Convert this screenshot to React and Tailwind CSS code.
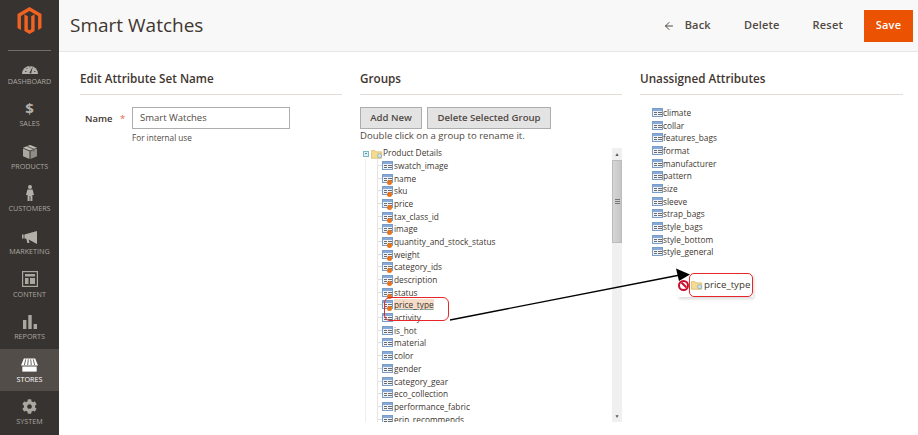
import { ArrowLeft } from "lucide-react";
import { FaCog } from "react-icons/fa";

const navItems = [
  {
    label: "DASHBOARD",
    icon: (
      <svg viewBox="0 0 16 11" className="w-[16px] h-[11px]">
        <path d="M0 11A8 8 0 0 1 16 11z" fill="#b3afa9" />
        <path d="M7.4 10 11 3l-1.9 7.4z" fill="#373330" />
        <path d="M3 8.5h1.5M8 3v1.5M12 8.5h1.4M4.5 5l1 1" stroke="#373330" strokeWidth="0.8" />
      </svg>
    ),
  },
  {
    label: "SALES",
    icon: <span className="block h-[20px] -mb-[2px] text-[15px] leading-[20px] font-bold text-[#b3afa9]">$</span>,
  },
  {
    label: "PRODUCTS",
    icon: (
      <svg viewBox="0 0 14 14" className="w-[14px] h-[14px]">
        <path d="M7 0 14 2.8 7 5.6 0 2.8z" fill="#c4c0ba" />
        <path d="M0 3.6 6.5 6.3V14L0 11.2z" fill="#aaa6a0" />
        <path d="M14 3.6 7.5 6.3V14l6.5-2.8z" fill="#8f8b85" />
        <path d="M3 1.6 10 4.4v2.4l1.6-.7V3.7L4.7 1z" fill="#6f6a65" />
      </svg>
    ),
  },
  {
    label: "CUSTOMERS",
    icon: (
      <svg viewBox="0 0 8 16" className="w-[8px] h-[16px]" fill="#b3afa9">
        <circle cx="4" cy="2" r="2" />
        <path d="M1.4 4.6h5.2L8 10H6.4v6H4.4v-5h-.8v5h-2v-6H0z" />
      </svg>
    ),
  },
  {
    label: "MARKETING",
    icon: (
      <svg viewBox="0 0 15 13" className="w-[15px] h-[13px]" fill="#b3afa9">
        <path d="M0 3.6h1.6v3.8H0z" />
        <path d="M2.4 3.4 15 0v13L6.6 8.6l.9 3.4H5.4L4.3 7.8 2.4 7.6z" />
      </svg>
    ),
  },
  {
    label: "CONTENT",
    icon: (
      <svg viewBox="0 0 16 16" className="w-[16px] h-[16px]" fill="none" stroke="currentColor">
        <rect x="0.6" y="0.6" width="14.8" height="14.8" strokeWidth="1.2" />
        <path d="M3 3h10v2.4H3zM3 7h3.5v6H3zM8 7h5v6H8z" fill="currentColor" stroke="none" />
      </svg>
    ),
  },
  {
    label: "REPORTS",
    icon: (
      <svg viewBox="0 0 14 14" className="w-[14px] h-[14px]" fill="currentColor">
        <path d="M0 5h3.4v9H0zM5.3 0h3.4v14H5.3zM10.6 9H14v5h-3.4z" />
      </svg>
    ),
  },
  {
    label: "STORES",
    icon: (
      <svg viewBox="0 0 18 14" className="w-[17px] h-[14px]" fill="#fff">
        <path d="M3 0h12l3 7.4H0z" />
        <path d="M5 1 3.6 7M7.7 1l-.6 6M10.3 1l.6 6M13 1l1.4 6" stroke="#524d49" strokeWidth="0.9" />
        <path d="M1.4 8.6h15.2V14H1.4z" />
      </svg>
    ),
    active: true,
  },
  { label: "SYSTEM", icon: <FaCog className="w-[15px] h-[15px]" /> },
];

const treeRows = [
  ["swatch_image", false],
  ["name", true],
  ["sku", true],
  ["price", true],
  ["tax_class_id", true],
  ["image", true],
  ["quantity_and_stock_status", true],
  ["weight", true],
  ["category_ids", true],
  ["description", true],
  ["status", true],
  ["price_type", true],
  ["activity", false],
  ["is_hot", false],
  ["material", false],
  ["color", false],
  ["gender", false],
  ["category_gear", false],
  ["eco_collection", false],
  ["performance_fabric", false],
  ["erin_recommends", false],
];

const unassigned = [
  "climate",
  "collar",
  "features_bags",
  "format",
  "manufacturer",
  "pattern",
  "size",
  "sleeve",
  "strap_bags",
  "style_bags",
  "style_bottom",
  "style_general",
];

const AttrIcon = ({ dot }) => (
  <span className="relative shrink-0 w-[11px] h-[9px] border border-[#7a9cc8] bg-[#eef3fa] block">
    <span className="absolute left-0 right-0 top-0 h-[2px] bg-[#86a9d8]" />
    <span className="absolute left-[1px] top-[3px] w-[3px] h-[1px] bg-[#6b6b6b]" />
    <span className="absolute left-[1px] top-[5px] w-[3px] h-[1px] bg-[#6b6b6b]" />
    <span className="absolute left-[5px] top-[3px] w-[4px] h-[1px] bg-[#6b6b6b]" />
    <span className="absolute left-[5px] top-[5px] w-[4px] h-[1px] bg-[#6b6b6b]" />
    {dot && <span className="absolute left-[4px] top-[5px] w-[5px] h-[5px] rounded-full bg-[#e8751a]" />}
  </span>
);

const Folder = () => (
  <svg viewBox="0 0 14 11" className="w-[12px] h-[10px] shrink-0">
    <path d="M0.5 1.5h4l1 1.5h7v7.5h-12z" fill="#f5dc8e" stroke="#d3b765" strokeWidth="0.8" />
    <circle cx="10" cy="7.5" r="2.4" fill="#cfe2f5" stroke="#6f9bc9" strokeWidth="0.7" />
  </svg>
);

const SectionTitle = ({ children }) => (
  <h2 className="text-[11.7px] leading-[16px] font-semibold text-[#41362f] pb-[8px] border-b border-[#e3ddd8]">
    {children}
  </h2>
);

const GrayButton = ({ children, className }) => (
  <button className={`h-[22px] bg-[#e3e3e3] border border-[#adadad] text-[#514943] text-[9.6px] font-semibold whitespace-nowrap ${className}`}>
    {children}
  </button>
);

const App = () => {
  return (
    <div className="relative flex w-[918px] h-[435px] overflow-hidden bg-white text-[#41362f] font-['Open_Sans',sans-serif]">
      {/* Sidebar */}
      <aside className="w-[59px] shrink-0 bg-[#373330] flex flex-col text-[#aaa6a0]">
        <div className="h-[50.5px] mx-[8px] flex items-start justify-center pt-[7px] border-b border-[#736e69]">
          <svg viewBox="0 0 24 28" className="w-[25px] h-[28px]">
            <path
              d="M12 0 24 7v14l-3.4 2V9l-8.6-5-8.6 5v14L0 21V7zM13.7 9.2l3.4-2v16.9L12 27l-5.1-2.9V7.2l3.4 2v13l1.7 1 1.7-1z"
              fill="#f26322"
            />
          </svg>
        </div>
        <nav className="flex flex-col">
          {navItems.map((item) => (
            <div
              key={item.label}
              className={`h-[42.6px] flex flex-col items-center justify-end pb-[7.5px] gap-[2px] ${item.active ? "bg-[#524d49] text-white" : ""}`}
            >
              {item.icon}
              <span className={`text-[7.2px] leading-[10px] ${item.active ? "text-white" : "text-[#aaa6a0]"}`}>
                {item.label}
              </span>
            </div>
          ))}
        </nav>
      </aside>

      <main className="flex-1 flex flex-col min-w-0">
        {/* Header */}
        <header className="h-[52px] shrink-0 bg-[#f8f8f8] border-b border-[#e6e6e6] flex items-center pl-[11px] pr-[5px]">
          <h1 className="text-[19px] text-[#41362f]">Smart Watches</h1>
          <div className="ml-auto flex items-center text-[11px] font-semibold text-[#514943] tracking-[0.2px]">
            <ArrowLeft className="w-[12px] h-[12px] mr-[10px]" strokeWidth={2} />
            <span>Back</span>
            <span className="ml-[33px]">Delete</span>
            <span className="ml-[33px]">Reset</span>
            <button className="ml-[21px] w-[49px] h-[32px] bg-[#eb5202] text-white font-semibold">Save</button>
          </div>
        </header>

        {/* Columns */}
        <div className="flex-1 flex gap-[18px] pl-[21px] pr-[15px] pt-[18px] min-h-0">
          {/* Edit name */}
          <section className="w-[262px]">
            <SectionTitle>Edit Attribute Set Name</SectionTitle>
            <div className="flex items-start mt-[12px]">
              <span className="w-[52px] pl-[5px] text-[9.5px] font-semibold leading-[23px] shrink-0 text-[#41362f]">
                Name <span className="text-[#e8643c] font-normal ml-[5px]">*</span>
              </span>
              <div>
                <div className="w-[158px] h-[22px] border border-[#adadad] flex items-center pl-[7px] text-[9.5px] text-[#514943]">
                  Smart Watches
                </div>
                <p className="text-[8.2px] leading-[12px] mt-[3px] text-[#514943]">For internal use</p>
              </div>
            </div>
          </section>

          {/* Groups */}
          <section className="w-[262px] flex flex-col min-h-0">
            <SectionTitle>Groups</SectionTitle>
            <div className="flex gap-[5px] mt-[12px]">
              <GrayButton className="w-[62px]">Add New</GrayButton>
              <GrayButton className="w-[124px]">Delete Selected Group</GrayButton>
            </div>
            <p className="text-[9.6px] leading-[14px] text-[#514943]">Double click on a group to rename it.</p>
            <div className="relative mt-[5px] h-[274px] flex overflow-hidden">
              <div className="flex-1 pl-[5px] overflow-hidden">
                <div className="flex items-center h-[11px] text-[8.3px] text-[#41362f] -ml-[2px]">
                  <span className="relative w-[6px] h-[6px] border border-[#7db5c9] bg-[#dff0f5] shrink-0 mr-[2px]">
                    <span className="absolute left-[1px] top-[1.5px] w-[2px] h-[1px] bg-[#4b93ad]" />
                  </span>
                  <Folder />
                  <span>Product Details</span>
                </div>
                <div className="border-l border-[#eeeeee] pl-[11px]">
                  <div className="border-l border-[#e6e6e6]">
                    {treeRows.map(([name, dot]) => (
                      <div key={name} className="h-[12.7px] flex items-center">
                        <span className="w-[4px] border-t border-[#dddddd] shrink-0" />
                        <AttrIcon dot={dot} />
                        <span
                          className={`ml-[1px] text-[8.3px] leading-[11px] text-[#41362f] ${name === "price_type" ? "bg-[#f5dcc8] underline decoration-[#8aa]" : ""}`}
                        >
                          {name}
                        </span>
                      </div>
                    ))}
                  </div>
                </div>
              </div>
              {/* Scrollbar */}
              <div className="w-[10px] shrink-0 bg-[#f0f0f0] flex flex-col items-center justify-between">
                <div className="w-full flex flex-col items-center">
                  <span className="text-[5px] leading-[12px] text-[#555]">▲</span>
                  <div className="w-full h-[83px] bg-gradient-to-r from-[#d6d6d6] to-[#c6c6c6] border border-[#bbbbbb] flex items-center justify-center">
                    <span className="w-[5px] h-[6px] bg-[repeating-linear-gradient(#777_0_1px,transparent_1px_2px)]" />
                  </div>
                </div>
                <span className="text-[5px] leading-[12px] text-[#555]">▼</span>
              </div>
            </div>
          </section>

          {/* Unassigned */}
          <section className="flex-1">
            <SectionTitle>Unassigned Attributes</SectionTitle>
            <div className="mt-[11px] pl-[12px]">
              {unassigned.map((name) => (
                <div key={name} className="h-[12.7px] flex items-center">
                  <AttrIcon />
                  <span className="text-[8.3px] leading-[11px] text-[#41362f]">{name}</span>
                </div>
              ))}
            </div>
          </section>
        </div>
      </main>

      {/* Annotations over the screenshot */}
      <div className="absolute left-[384px] top-[297px] w-[65px] h-[24px] rounded-[6px] border border-[#e8262a]" />
      <div className="absolute left-[678px] top-[273px] w-[75px] h-[24px] flex items-center shadow-[1px_2px_3px_rgba(0,0,0,0.15)]">
        <span className="w-[11px] h-[11px] rounded-full border-2 border-[#c8102e] relative shrink-0 overflow-hidden">
          <span className="absolute left-[-2px] top-[2.5px] w-[12px] h-[2px] bg-[#c8102e] rotate-45" />
        </span>
      </div>
      <div className="absolute left-[689px] top-[273px] w-[64px] h-[24px] rounded-[5px] border border-[#e8262a] bg-white flex items-center pl-[1px] gap-[1px] overflow-hidden">
        <Folder />
        <span className="text-[9.7px] text-[#41362f]">price_type</span>
      </div>
      <svg className="absolute left-0 top-0 w-[918px] h-[435px] pointer-events-none" viewBox="0 0 918 435">
        <path d="M450 320 680 275" stroke="#000" strokeWidth="1.4" fill="none" />
        <path d="M690 274.5 676 268.5 679 281z" fill="#000" />
      </svg>
    </div>
  );
};

export default App;
